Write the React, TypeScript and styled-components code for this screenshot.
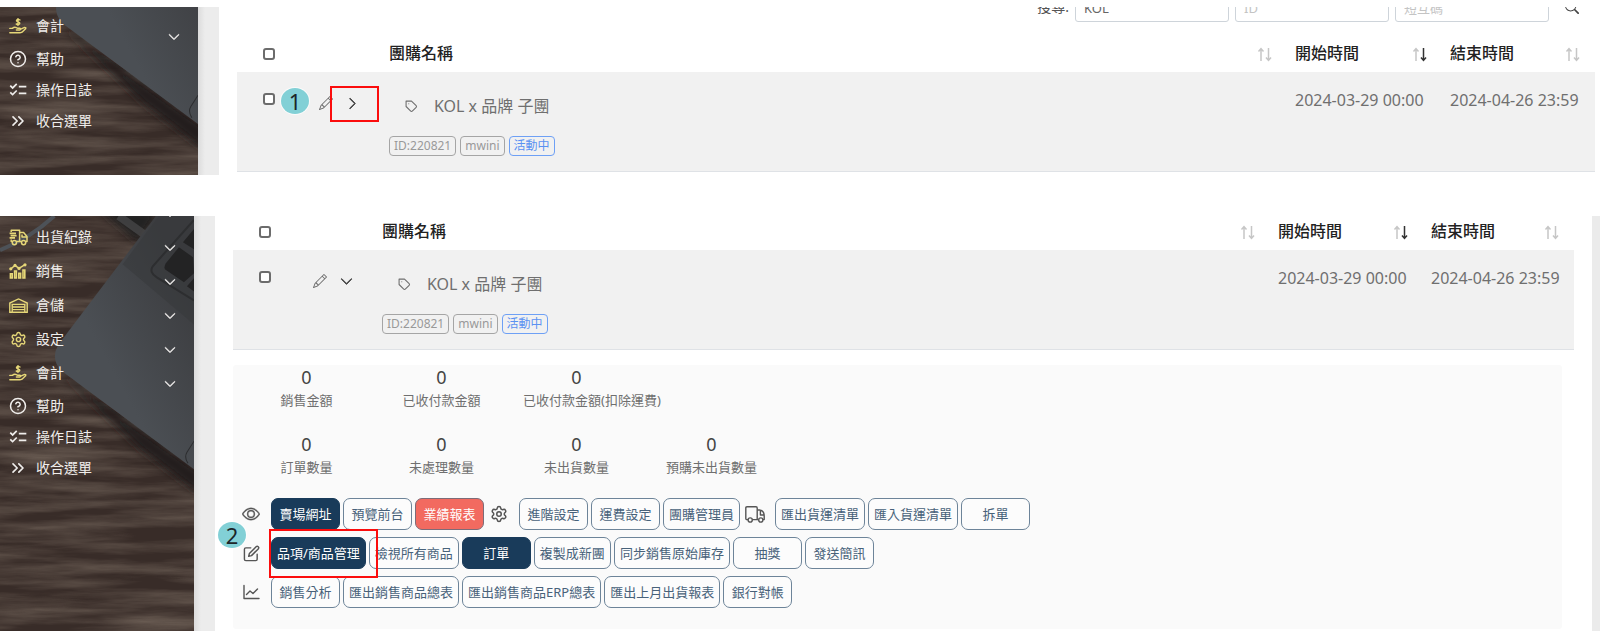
import React from "react";
import styled, { createGlobalStyle, css } from "styled-components";
import { BsPencil, BsChevronDown, BsChevronRight, BsEye, BsSearch } from "react-icons/bs";
import { FiEdit, FiTag } from "react-icons/fi";
import { MdChecklist } from "react-icons/md";
import { ChevronsRight, CircleHelp, Settings } from "lucide-react";

const GlobalStyle = createGlobalStyle`
  * { box-sizing: border-box; }
  body {
    margin: 0;
    background: #fff;
    color: #6f6f6f;
    font-family: "Noto Sans", "Noto Sans CJK TC", sans-serif;
    font-size: 16px;
  }
  button, input { font-family: inherit; }
`;

const Page = styled.div`
  padding-top: 7px;
  display: flex;
  flex-direction: column;
  gap: 41px;
`;

const Screen = styled.section<{ $edge?: boolean }>`
  display: flex;
  overflow: hidden;
  border-right: ${(p) => (p.$edge ? "8px solid #ebebeb" : "none")};
`;

const Sidebar = styled.aside<{ $width: number }>`
  position: relative;
  flex: none;
  width: ${(p) => p.$width}px;
  overflow: hidden;
  background: #392e29;
`;

const Backdrop = styled.svg`
  position: absolute;
  inset: 0;
  width: 100%;
  height: 100%;
`;

const Gutter = styled.div`
  flex: none;
  width: 21px;
  background: linear-gradient(90deg, #dcdcdc, #ececec 7px);
`;

const Main = styled.main<{ $right: number }>`
  flex: 1;
  min-width: 0;
  padding: 0 ${(p) => p.$right}px 2px 18px;
`;

const Menu = styled.ul<{ $offset: number }>`
  position: relative;
  list-style: none;
  margin: ${(p) => p.$offset}px 0 39px;
  padding: 0;
`;

const MenuEntry = styled.li<{ $group?: boolean }>`
  display: flex;
  height: ${(p) => (p.$group ? 34 : 31)}px;
`;

const MenuButton = styled.button`
  flex: 1;
  display: flex;
  align-items: center;
  padding: 0 18px 0 8px;
  gap: 8px;
  border: 0;
  background: none;
  color: #f0eeec;
  font-size: 14px;
  line-height: 20px;
  text-align: left;
  white-space: nowrap;
`;

const MenuIcon = styled.span<{ $gold?: boolean }>`
  display: flex;
  justify-content: center;
  flex: none;
  width: 20px;
  color: ${(p) => (p.$gold ? "#e6d778" : "#f0eeec")};
`;

const MenuArrow = styled.span`
  display: flex;
  align-self: flex-end;
  margin-left: auto;
`;

const Toolbar = styled.form`
  display: flex;
  align-items: center;
  justify-content: flex-end;
  gap: 6px;
  margin: -13px 0 12px;
  padding-right: 16px;
`;

const ToolbarLabel = styled.label`
  padding-bottom: 3px;
  font-size: 14px;
  line-height: 20px;
  color: #555;
`;

const ToolbarInput = styled.input`
  width: 154px;
  height: 28px;
  padding: 0 8px;
  border: 1px solid #ced4da;
  border-radius: 3px;
  color: #666;
  font-size: 13px;
  &::placeholder { color: #c4c4c4; opacity: 1; }
`;

const IconButton = styled.button`
  display: flex;
  padding: 0;
  border: 0;
  background: none;
  color: #666;
`;

const ToggleButton = styled(IconButton)`
  color: #444;
`;

const SearchButton = styled(IconButton)`
  margin-left: 10px;
  padding-bottom: 3px;
  color: #444;
`;

const Table = styled.table<{ $lift?: number }>`
  width: 100%;
  margin-top: ${(p) => -(p.$lift ?? 0)}px;
  table-layout: fixed;
  border-collapse: collapse;
`;

const HeadCell = styled.th`
  height: 38px;
  padding: 0 15px 0 8px;
  color: #222;
  font-size: 16px;
  font-weight: 500;
  line-height: 24px;
  text-align: left;
`;

const HeadContent = styled.div`
  display: flex;
  align-items: center;
  justify-content: space-between;
`;

const Cell = styled.td`
  padding: 16px 0 15px 8px;
  background: #f1f1f1;
  border-bottom: 1px solid #dfe2e6;
  line-height: 24px;
  vertical-align: top;
  white-space: nowrap;
`;

const checkCell = css`padding-left: 26px;`;
const CheckHead = styled(HeadCell)`
  ${checkCell}
  padding-top: 2px;
`;
const CheckBodyCell = styled(Cell)`${checkCell}`;

const Check = styled.input`
  appearance: none;
  display: block;
  width: 12px;
  height: 12px;
  margin: 0;
  border: 2px solid #6c6c6c;
  border-radius: 3px;
  background: #fff;
  ${CheckBodyCell} & { margin-top: 5px; }
`;

const Actions = styled.div`
  display: flex;
  align-items: center;
  gap: 13px;
  height: 24px;
  margin-top: 3px;
  padding-left: 10px;
`;

const NameLine = styled.div`
  display: flex;
  align-items: center;
  gap: 16px;
  height: 32px;
  margin: 2px 0 14px;
  padding-left: 16px;
`;

const Tags = styled.div`
  display: flex;
  gap: 4px;
`;

const Tag = styled.span<{ $active?: boolean }>`
  height: 20px;
  padding: 0 4px;
  border: 1px solid ${(p) => (p.$active ? "#6ea0f5" : "#a5a5a5")};
  border-radius: 4px;
  color: ${(p) => (p.$active ? "#5b92f2" : "#999")};
  font-size: 12px;
  line-height: 18px;
`;

const Anchor = styled.div`
  position: relative;
`;

const Badge = styled.span<{ $x: number; $y: number }>`
  position: absolute;
  z-index: 2;
  left: ${(p) => p.$x}px;
  top: ${(p) => p.$y}px;
  width: 28px;
  height: 26px;
  border-radius: 50%;
  background: #82d0d6;
  color: #1c2528;
  font-size: 22px;
  line-height: 26px;
  text-align: center;
  box-shadow: 0 0 0 1px #ffffffaa;
`;

const Highlight = styled.span<{ $x: number; $y: number; $w: number; $h: number }>`
  position: absolute;
  z-index: 1;
  left: ${(p) => p.$x}px;
  top: ${(p) => p.$y}px;
  width: ${(p) => p.$w}px;
  height: ${(p) => p.$h}px;
  border: 2px solid #fb0d0d;
  pointer-events: none;
`;

const Detail = styled.div`
  margin: 15px 12px 0 0;
  padding: 0 0 21px 6px;
  border-radius: 3px;
  background: #fafafa;
`;

const Stats = styled.dl`
  display: grid;
  grid-template-columns: repeat(4, 135px);
  row-gap: 21px;
  margin: 0 0 20px;
`;

const Stat = styled.div`
  display: flex;
  flex-direction: column-reverse;
  padding: 0 14px;
  text-align: center;
`;

const StatLabel = styled.dt`
  font-size: 13px;
  line-height: 22px;
  white-space: nowrap;
`;

const StatValue = styled.dd`
  margin: 0;
  color: #444;
  font-size: 18px;
  line-height: 24px;
`;

const ButtonRows = styled.div`
  position: relative;
  display: flex;
  flex-direction: column;
  gap: 7px;
`;

const ButtonRow = styled.div`
  display: flex;
  gap: 3px;
`;

const RowIcon = styled.span`
  display: flex;
  flex: none;
  align-items: center;
  justify-content: center;
  width: 29px;
  padding-right: 5px;
  color: #555;
`;

type Tone = "plain" | "navy" | "coral";

const tones: Record<Tone, { bg: string; fg: string; line: string }> = {
  plain: { bg: "#fcfcfc", fg: "#48627a", line: "#6d8499" },
  navy: { bg: "#193b5a", fg: "#fff", line: "#193b5a" },
  coral: { bg: "#f26a60", fg: "#fff", line: "#7d6c78" },
};

const ActionButton = styled.button<{ $tone: Tone }>`
  min-width: 69px;
  height: 32px;
  padding: 0 5px;
  border: 1px solid ${(p) => tones[p.$tone].line};
  border-radius: 7px;
  background: ${(p) => tones[p.$tone].bg};
  color: ${(p) => tones[p.$tone].fg};
  font-size: 13px;
  line-height: 20px;
  white-space: nowrap;
`;

/* Desk photo: wooden top with the corner of a laptop and its keyboard */
function DeskBackdrop({ id, top, height }: { id: string; top: number; height: number }) {
  return (
    <Backdrop viewBox={`0 ${top} 193 ${height}`} preserveAspectRatio="xMinYMin slice" aria-hidden="true">
      <defs>
        <filter id={`${id}-grain`} x="0" y="0" width="100%" height="100%">
          <feTurbulence type="fractalNoise" baseFrequency="0.009 0.09" numOctaves="5" seed="21" />
          <feColorMatrix values="0 0 0 0 0.36  0 0 0 0 0.29  0 0 0 0 0.23  1.6 0 0 0 -0.5" />
        </filter>
        <filter id={`${id}-soft`}>
          <feGaussianBlur stdDeviation="4" />
        </filter>
        <linearGradient id={`${id}-lid`} x1="0" y1="1" x2="1" y2="0">
          <stop offset="0.4" stopColor="#4b4f54" />
          <stop offset="0.85" stopColor="#3c3d40" />
        </linearGradient>
      </defs>
      <rect width="193" height="440" fill="#382c28" />
      <rect width="193" height="440" filter={`url(#${id}-grain)`} opacity="0.45" />
      <path d="M100 -6 L160 -6 L138 26 Z" fill="#242223" filter={`url(#${id}-soft)`} />
      <path d="M0 34 Q30 22 54 0" fill="none" stroke="#4d5258" strokeWidth="4" />
      <path d="M118 0 L143 18" fill="none" stroke="#4a4a4b" strokeWidth="8" opacity="0.7" />
      <path d="M60 156 L200 255 L200 278 L140 232 Z" fill="#231f1f" filter={`url(#${id}-soft)`} />
      <path d="M155 0 L58 128 Q50 142 61 154 L193 252 V0 Z" fill={`url(#${id}-lid)`} />
      <path d="M122 48 L193 108 V0 H158 Z" fill="#36373a" opacity="0.5" />
      <path d="M193 4 L152 50 Q148 56 156 61 L193 84" fill="none" stroke="#2d2e30" strokeWidth="2" />
      <path d="M178 31 L192 41 L193 57 L183 66 L164 53 Q163 50 165 47 Z" fill="#232324" />
      <path d="M193 13 L182 26 L193 33 Z M193 62 L186 70 L193 75 Z" fill="#232324" />
      <path d="M193 224 L186 235 Q183 240 187 246" fill="none" stroke="#2c2d2f" strokeWidth="1" />
    </Backdrop>
  );
}

const DeliveryIcon = () => (
  <svg width="19" height="17" viewBox="0 0 19 17" fill="none" stroke="currentColor" strokeWidth="1.5" strokeLinejoin="round">
    <path d="M2.2 3 V1.2 H10.6 V12.6 H7.6 M2.2 10.6 V12.6 H3.2" />
    <path d="M0.6 4.4 H7 M1.6 6.6 H7.6 M0.6 8.8 H6" strokeWidth="1.7" />
    <path d="M10.6 3.6 H14.6 L18 7.6 V12.6 H16.8 M12.4 12.6 H10.6 M13 5.4 V8 H17.6" />
    <circle cx="5.4" cy="13.6" r="2.1" /><circle cx="14.6" cy="13.6" r="2.1" />
  </svg>
);

const SalesIcon = () => (
  <svg width="18" height="16" viewBox="0 0 18 16" fill="none" stroke="currentColor" strokeWidth="1.6">
    <path d="M1.6 6 L6 2.4 L10 5.4 L16 1.6" />
    <g fill="currentColor" stroke="none">
      <circle cx="1.8" cy="5.8" r="1.6" /><circle cx="6" cy="2.4" r="1.6" />
      <circle cx="10" cy="5.4" r="1.6" /><circle cx="16" cy="1.8" r="1.6" />
    </g>
    <path d="M1.4 15 V10.8 H3.2 V15 Z M5.6 15 V8 H7.4 V15 Z M9.8 15 V10.4 H11.6 V15 Z M14 15 V7 H15.8 V15 Z" />
  </svg>
);

const WarehouseIcon = () => (
  <svg width="19" height="15" viewBox="0 0 19 15" fill="none" stroke="currentColor" strokeWidth="1.4">
    <path d="M0.8 14.2 V5 L9.5 0.9 L18.2 5 V14.2 H15.8 V6.4 H3.2 V14.2 Z" />
    <path d="M3.4 9 H15.6 M3.4 11.6 H15.6 M3.4 14.2 H15.6" />
  </svg>
);

const AccountIcon = () => (
  <svg width="18" height="17" viewBox="0 0 18 17" fill="none" stroke="currentColor" strokeWidth="1.4" strokeLinecap="round" strokeLinejoin="round">
    <path d="M11 2 Q8.9 0.9 7.7 2 Q7 3.4 9 3.9 Q11.2 4.4 10.6 5.8 Q9.4 7 7.2 6 M9 0.6 V7.4" />
    <path d="M0.8 10.4 H3.4 Q5 9 6.6 9.4 L8.4 10.2 H11 Q12 11.4 10.8 12 H7.4 M11.8 11.2 L15.6 9.4 Q17.4 9.4 16.6 10.8 L13 14.2 Q12 14.8 10.6 14.8 H0.8" />
  </svg>
);

const TruckIcon = () => (
  <svg width="20" height="17" viewBox="0 0 20 17" fill="none" stroke="currentColor" strokeWidth="1.4" strokeLinejoin="round">
    <path d="M3 13.6 H2 Q0.8 13.6 0.8 12.4 V2 Q0.8 0.8 2 0.8 H11 Q12.2 0.8 12.2 2 V13.6 H7.4" />
    <path d="M12.2 4 H14.4 Q19.2 4.6 19.2 10 V13.6 H18 M13.6 13.6 H12.2 M15.4 4.4 V9 H19" />
    <circle cx="5.2" cy="14" r="2.1" /><circle cx="15.8" cy="14" r="2.1" />
  </svg>
);

const ChartIcon = () => (
  <svg width="17" height="16" viewBox="0 0 17 16" fill="none" stroke="currentColor" strokeWidth="1.4" strokeLinecap="round" strokeLinejoin="round">
    <path d="M1 1.5 V14.5 H16" />
    <path d="M3.5 10.5 L7 7 L10 9.5 L14.5 5" />
  </svg>
);

const SortIcon = ({ descending }: { descending?: boolean }) => (
  <svg width="15" height="17" viewBox="0 0 15 17" fill="none" strokeWidth="1.5">
    <path d="M4 16 V4 M1.5 6.5 L4 3.6 L6.5 6.5" stroke="#c6c6c6" />
    <path d="M11.5 3 V15 M9 12.5 L11.5 15.4 L14 12.5" stroke={descending ? "#333" : "#c6c6c6"} />
  </svg>
);

type Item = { label: string; icon: React.ReactNode; group?: boolean };

const account: Item = { label: "會計", icon: <AccountIcon />, group: true };
const footer: Item[] = [
  { label: "幫助", icon: <CircleHelp size={18} /> },
  { label: "操作日誌", icon: <MdChecklist size={20} /> },
  { label: "收合選單", icon: <ChevronsRight size={20} /> },
];
const groups: Item[] = [
  { label: "", icon: null, group: true },
  { label: "出貨紀錄", icon: <DeliveryIcon />, group: true },
  { label: "銷售", icon: <SalesIcon />, group: true },
  { label: "倉儲", icon: <WarehouseIcon />, group: true },
  { label: "設定", icon: <Settings size={17} />, group: true },
];

function SideMenu({ items, offset }: { items: Item[]; offset: number }) {
  return (
    <Menu $offset={offset}>
      {items.map((item) => (
        <MenuEntry key={item.label} $group={item.group}>
          <MenuButton type="button">
            <MenuIcon $gold={item.group}>{item.icon}</MenuIcon>
            {item.label}
            {item.group && (
              <MenuArrow>
                <BsChevronDown size={12} stroke="currentColor" strokeWidth={1} />
              </MenuArrow>
            )}
          </MenuButton>
        </MenuEntry>
      ))}
    </Menu>
  );
}

function CampaignTable({ columns, open, lift }: { columns: number[]; open?: boolean; lift?: number }) {
  const [check, actions, start, end] = columns;
  const Chevron = open ? BsChevronDown : BsChevronRight;
  return (
    <Table $lift={lift}>
      <colgroup>
        <col width={check} /><col width={actions} /><col /><col width={start} /><col width={end} />
      </colgroup>
      <thead>
        <tr>
          <CheckHead><Check type="checkbox" aria-label="團購名稱" /></CheckHead>
          <HeadCell />
          <HeadCell><HeadContent>團購名稱<SortIcon /></HeadContent></HeadCell>
          <HeadCell><HeadContent>開始時間<SortIcon descending /></HeadContent></HeadCell>
          <HeadCell><HeadContent>結束時間<SortIcon /></HeadContent></HeadCell>
        </tr>
      </thead>
      <tbody>
        <tr>
          <CheckBodyCell><Check type="checkbox" aria-label="KOL x 品牌 子團" /></CheckBodyCell>
          <Cell>
            <Anchor>
              <Actions>
                <IconButton type="button"><BsPencil size={14} /></IconButton>
                <ToggleButton type="button"><Chevron size={13} stroke="currentColor" strokeWidth={1} /></ToggleButton>
              </Actions>
              {!open && <Badge $x={-28} $y={-3}>1</Badge>}
              {!open && <Highlight $x={21} $y={-5} $w={49} $h={36} />}
            </Anchor>
          </Cell>
          <Cell>
            <NameLine><FiTag size={13} />KOL x 品牌 子團</NameLine>
            <Tags><Tag>ID:220821</Tag><Tag>mwini</Tag><Tag $active>活動中</Tag></Tags>
          </Cell>
          <Cell>2024-03-29 00:00</Cell>
          <Cell>2024-04-26 23:59</Cell>
        </tr>
      </tbody>
    </Table>
  );
}

const stats = [
  ["銷售金額", "已收付款金額", "已收付款金額(扣除運費)", null],
  ["訂單數量", "未處理數量", "未出貨數量", "預購未出貨數量"],
].flat();

type Part = { icon: React.ReactNode } | { label: string; tone?: Tone };

const buttonRows: Part[][] = [
  [
    { icon: <BsEye size={18} stroke="currentColor" strokeWidth={0.3} /> },
    { label: "賣場網址", tone: "navy" }, { label: "預覽前台" }, { label: "業績報表", tone: "coral" },
    { icon: <Settings size={18} /> },
    { label: "進階設定" }, { label: "運費設定" }, { label: "團購管理員" },
    { icon: <TruckIcon /> },
    { label: "匯出貨運清單" }, { label: "匯入貨運清單" }, { label: "拆單" },
  ],
  [
    { icon: <FiEdit size={17} /> },
    { label: "品項/商品管理", tone: "navy" }, { label: "檢視所有商品" }, { label: "訂單", tone: "navy" },
    { label: "複製成新團" }, { label: "同步銷售原始庫存" }, { label: "抽獎" }, { label: "發送簡訊" },
  ],
  [
    { icon: <ChartIcon /> },
    { label: "銷售分析" }, { label: "匯出銷售商品總表" }, { label: "匯出銷售商品ERP總表" },
    { label: "匯出上月出貨報表" }, { label: "銀行對帳" },
  ],
];

export default function App() {
  return (
    <>
      <GlobalStyle />
      <Page>
        <Screen>
          <Sidebar $width={198}>
            <DeskBackdrop id="upper" top={138} height={164} />
            <SideMenu items={[account, ...footer]} offset={2} />
          </Sidebar>
          <Gutter />
          <Main $right={5}>
            <Toolbar>
              <ToolbarLabel htmlFor="keyword">搜尋:</ToolbarLabel>
              <ToolbarInput id="keyword" defaultValue="KOL" />
              <ToolbarInput placeholder="ID" aria-label="ID" />
              <ToolbarInput placeholder="短互碼" aria-label="短互碼" />
              <SearchButton type="button"><BsSearch size={14} /></SearchButton>
            </Toolbar>
            <CampaignTable columns={[64, 80, 155, 153]} />
          </Main>
        </Screen>
        <Screen $edge>
          <Sidebar $width={194}>
            <DeskBackdrop id="lower" top={0} height={415} />
            <SideMenu items={[...groups, account, ...footer]} offset={-30} />
          </Sidebar>
          <Gutter />
          <Main $right={18}>
            <CampaignTable columns={[62, 79, 153, 151]} open lift={4} />
            <Detail>
              <Stats>
                {stats.map((label, i) =>
                  label ? (
                    <Stat key={label}><StatLabel>{label}</StatLabel><StatValue>0</StatValue></Stat>
                  ) : <div key={i} />
                )}
              </Stats>
              <ButtonRows>
                {buttonRows.map((row, r) => (
                  <ButtonRow key={r}>
                    {row.map((part, i) =>
                      "icon" in part
                        ? <RowIcon key={i}>{part.icon}</RowIcon>
                        : <ActionButton key={i} type="button" $tone={part.tone ?? "plain"}>{part.label}</ActionButton>
                    )}
                  </ButtonRow>
                ))}
                <Badge $x={-21} $y={24}>2</Badge>
                <Highlight $x={30} $y={31} $w={109} $h={49} />
              </ButtonRows>
            </Detail>
          </Main>
        </Screen>
      </Page>
    </>
  );
}
